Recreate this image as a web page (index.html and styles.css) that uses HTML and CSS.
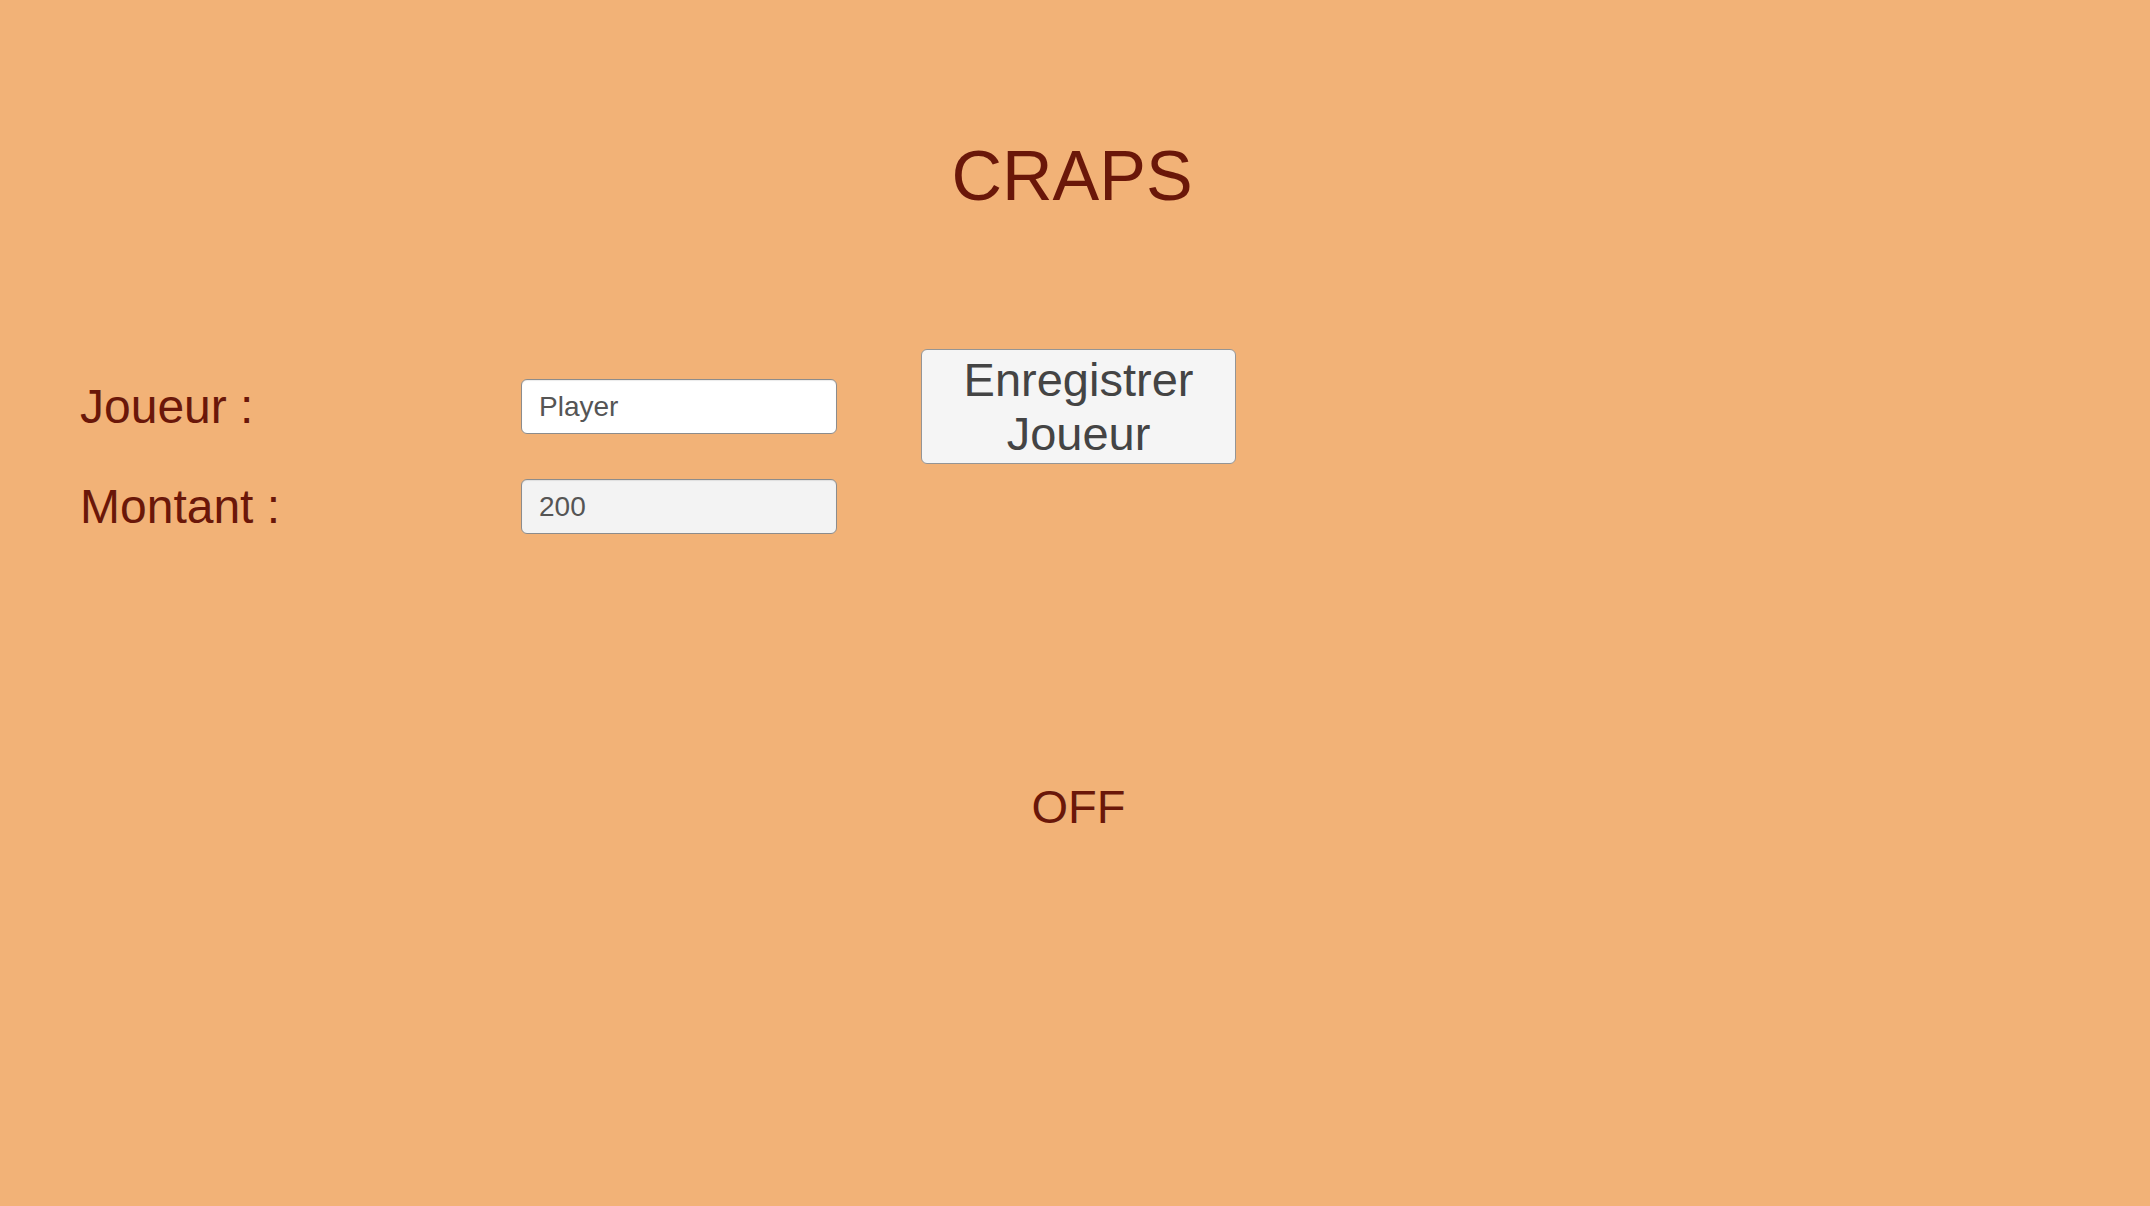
FILE: index.html
```html
<!DOCTYPE html>
<html lang="fr">
<head>
<meta charset="utf-8">
<title>CRAPS</title>
<link rel="stylesheet" href="styles.css">
</head>
<body>
<main class="page">
  <h1 class="title">CRAPS</h1>
  <form class="form">
    <label class="label" for="joueur">Joueur :</label>
    <input class="field field-white" id="joueur" type="text" value="Player">
    <button class="btn" type="button">Enregistrer<br>Joueur</button>
    <label class="label row2" for="montant">Montant :</label>
    <input class="field field-grey row2" id="montant" type="text" value="200">
    <div class="status">OFF</div>
  </form>
</main>
</body>
</html>
```
FILE: styles.css
```css
html, body {
  margin: 0;
  padding: 0;
  background: #F2B277;
  height: 100%;
}
body {
  font-family: "Liberation Sans", Arial, sans-serif;
  color: #6A1709;
}
.page {
  min-height: 1206px;
}
.title {
  margin: 0;
  padding-top: 136px;
  padding-right: 6px;
  font-size: 70px;
  line-height: 80px;
  font-weight: normal;
  text-align: center;
}
.form {
  margin-top: 133px;
  padding-left: 80px;
  display: grid;
  grid-template-columns: 441px 400px 315px;
  grid-template-rows: 115px 55px 1fr;
  row-gap: 15px;
  align-items: center;
}
.label {
  font-size: 48px;
  line-height: 55px;
  grid-column: 1;
}
.row2 { grid-row: 2; }
.field {
  grid-column: 2;
  box-sizing: border-box;
  width: 316px;
  height: 55px;
  border: 1px solid #8c8c8c;
  border-radius: 6px;
  padding: 0 0 0 17px;
  font-family: "Liberation Sans", Arial, sans-serif;
  font-size: 28px;
  color: #555;
  outline: none;
  box-shadow: inset 0 1px 1px rgba(0,0,0,0.08);
}
.field-white { background: #ffffff; }
.field-grey { background: #f3f3f3; }
.btn {
  grid-column: 3;
  grid-row: 1;
  box-sizing: border-box;
  width: 315px;
  height: 115px;
  background: #f5f5f5;
  border: 1px solid #959595;
  border-radius: 6px;
  font-family: "Liberation Sans", Arial, sans-serif;
  font-size: 47px;
  line-height: 54px;
  color: #444;
  padding: 0;
}
.status {
  grid-column: 3;
  grid-row: 3;
  align-self: start;
  margin-top: 231px;
  font-size: 47px;
  line-height: 54px;
  text-align: center;
}
```
